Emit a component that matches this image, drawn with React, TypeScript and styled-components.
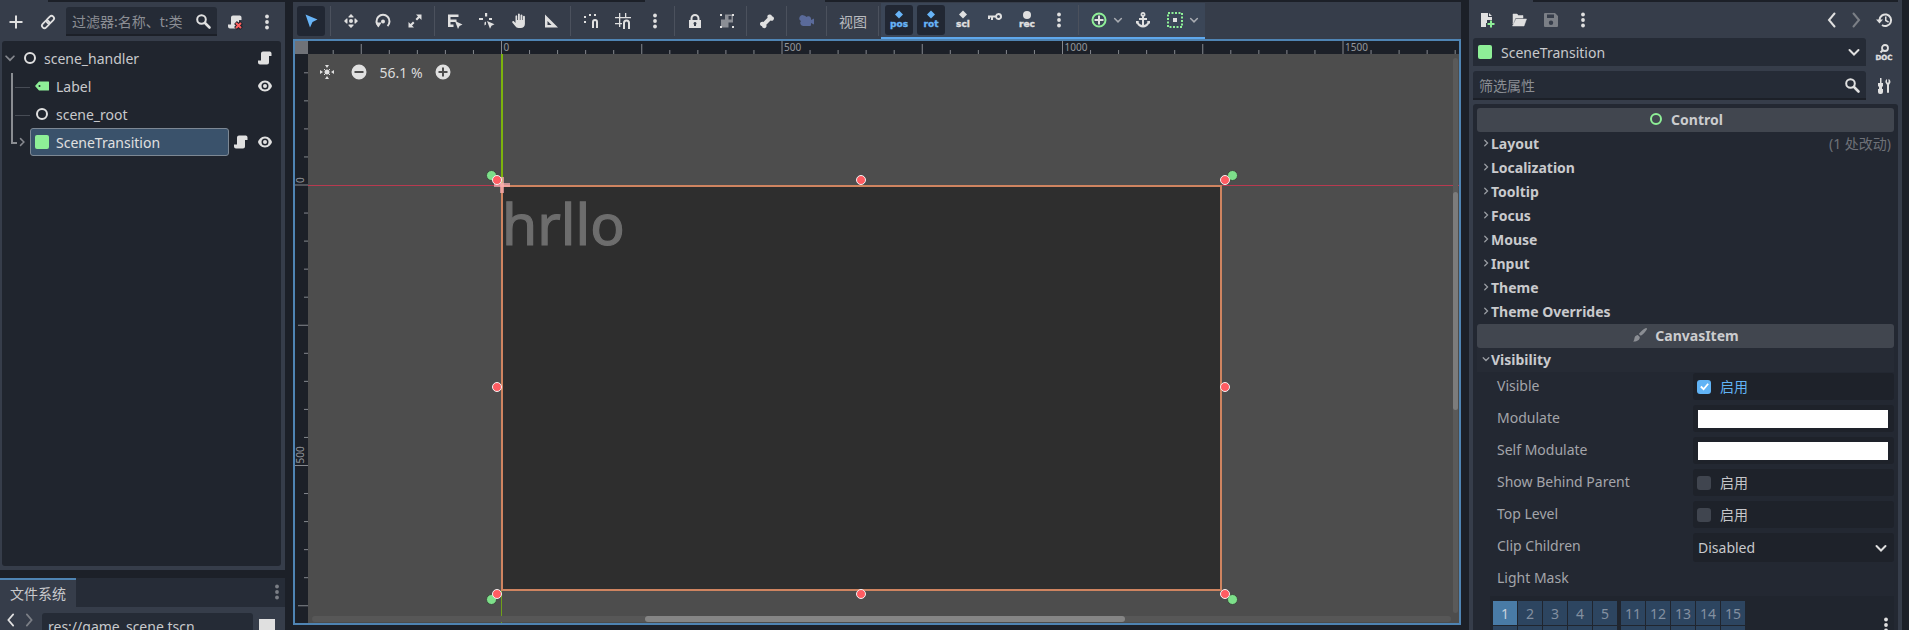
import React from "react";
import styled, { createGlobalStyle } from "styled-components";

const Global = createGlobalStyle`
  html, body { margin: 0; padding: 0; background: #1c2028; }
  body { width: 1909px; height: 630px; overflow: hidden; font-family: "Noto Sans", "Noto Sans CJK SC", sans-serif; font-size: 14px; color: #c8c9cc; }
  #root { width: 1909px; height: 630px; }
`;

const PANEL = "#363d4a";
const DARK = "#1c2028";
const FIELD = "#252b36";
const ICON = "#e0e0e0";

/* ---------- icons ---------- */
const Glyph = styled.svg<{ $size?: number; $color?: string }>`
  display: block;
  flex: none;
  width: ${(p) => p.$size ?? 16}px;
  height: ${(p) => p.$size ?? 16}px;
  color: ${(p) => p.$color ?? ICON};
  overflow: visible;
`;
const GlyphText = styled.text`
  font-family: "DejaVu Sans", sans-serif;
  font-weight: 700;
  fill: currentColor;
  stroke: currentColor;
  stroke-width: 0.35px;
`;
type IP = { $color?: string; $size?: number };
const mk = (children: React.ReactNode) => (p: IP) =>
  (
    <Glyph viewBox="0 0 16 16" fill="currentColor" {...p}>
      {children}
    </Glyph>
  );

const Plus = mk(<path d="M7 1.5h2V7h5.5v2H9v5.500H7V9H1.500V7H7z" />);
const Link = mk(
  <g fill="none" stroke="currentColor" strokeWidth="1.800" transform="rotate(-45 8 8)">
    <rect x="0.500" y="5.500" width="8.500" height="5" rx="2.500" />
    <rect x="7" y="5.500" width="8.500" height="5" rx="2.500" />
  </g>
);
const Search = mk(
  <g fill="none" stroke="currentColor">
    <circle cx="6.500" cy="6.500" r="4.300" strokeWidth="2" />
    <path d="M10 10l4.500 4.500" strokeWidth="2.600" strokeLinecap="round" />
  </g>
);
const scrollPath =
  "M6 1.500h7a2 2 0 0 1 1.500 2V6H12v6.500a2 2 0 0 1-2 2H3a2 2 0 0 1-2-2V10.500h3V3.500a2 2 0 0 1 2-2z";
const Script = mk(<path d={scrollPath} />);
const ScriptClear = mk(
  <>
    <path d={scrollPath} />
    <path d="M8.500 8.500l6 6m0-6l-6 6" stroke={DARK} strokeWidth="4" />
    <path d="M9 9l5 5m0-5l-5 5" stroke="#ff5f5f" strokeWidth="2" />
  </>
);
const Kebab = mk(
  <>
    <circle cx="8" cy="2.500" r="1.900" />
    <circle cx="8" cy="8" r="1.900" />
    <circle cx="8" cy="13.500" r="1.900" />
  </>
);
const Eye = mk(
  <>
    <path
      d="M8 2.500C12 2.500 14.500 6 15 8c-.5 2-3 5.500-7 5.500S1.500 10 1 8c.5-2 3-5.500 7-5.500zm0 2a3.500 3.500 0 1 0 0 7 3.500 3.500 0 0 0 0-7z"
      fillRule="evenodd"
    />
    <circle cx="8" cy="8" r="2" />
  </>
);
const Ring = mk(<circle cx="8" cy="8" r="5" fill="none" stroke="currentColor" strokeWidth="2" />);
const LabelTag = mk(
  <path
    d="M1 8l4-4.500h9.500a.5.5 0 0 1 .5.5v8a.5.5 0 0 1-.5.5H5zm4.500-1a1 1 0 1 0 0 2 1 1 0 0 0 0-2z"
    fillRule="evenodd"
  />
);
const Square = mk(<rect x="1" y="1" width="14" height="14" rx="2" />);
const Chevron = mk(
  <path d="M3.500 6l4.500 4.500L12.500 6" fill="none" stroke="currentColor" strokeWidth="2" strokeLinecap="round" />
);
const ChevronR = mk(
  <path d="M6 3.500L10.500 8 6 12.500" fill="none" stroke="currentColor" strokeWidth="2" strokeLinecap="round" />
);
const ArrowBack = mk(
  <path d="M10.500 1.500L5 8l5.500 6.500" fill="none" stroke="currentColor" strokeWidth="2" strokeLinecap="round" />
);
const ArrowFwd = mk(
  <path d="M5.500 1.500L11 8l-5.500 6.500" fill="none" stroke="currentColor" strokeWidth="2" strokeLinecap="round" />
);
const SelectArrow = mk(<path d="M2.500 1.500l12 5-5 2.500-2.500 5.500z" />);
const MoveTool = mk(
  <>
    <circle cx="8" cy="8" r="2" />
    <path d="M8 1l2.500 2.500v1h-5v-1zM8 15l-2.500-2.500v-1h5v1zM1 8l2.500-2.500h1v5h-1zM15 8l-2.500 2.500h-1v-5h1z" />
  </>
);
const RotateTool = mk(
  <>
    <path d="M3.500 13A6.500 6.500 0 1 1 12.500 13" fill="none" stroke="currentColor" strokeWidth="2" />
    <path d="M0.500 9.500h6L3.500 14.500z" />
    <circle cx="8" cy="8.500" r="2" />
  </>
);
const ScaleTool = mk(
  <path d="M9 1.500h5.500V7L12.500 5 10 7.500 8.500 6 11 3.500zM7 14.500H1.500V9L3.500 11 6 8.500 7.500 10 5 12.500z" />
);
const ListSelect = mk(
  <>
    <path d="M1 1.500h10.500v2.500H3.500v2.500h6V9h-6v2.500h3V14H1z" />
    <path d="M8 8l7.500 3.500-3 1.500-1.500 3z" />
  </>
);
const PivotTool = mk(
  <>
    <path d="M6 0h2.200v3.500H6zM0 5h4v2H0zM10 5h3v2h-3zM5.500 9.500l1.500-1v3l-1.500 1z" />
    <path d="M8 8l7.500 3.200-3 1.500-1.500 3z" />
  </>
);
const PanTool = mk(
  <path d="M7 1a1 1 0 0 1 1.800 0V7h.7V2.200a1 1 0 0 1 1.900 0V7h.6V3.500a1 1 0 0 1 1.900 0V11c0 2.500-2 4-4 4H7.500c-1.500 0-2.500-.8-3.300-2L1.300 9.500c-.6-1 .7-2 1.600-1.200L4.500 10V3a1 1 0 0 1 1.700 0v4H7z" />
);
const RulerTool = mk(<path d="M2 1.500l13 13H2zM4.500 8v4h4z" fillRule="evenodd" />);
const SmartSnap = mk(
  <>
    <path d="M9 9a3 3 0 0 1 6 0v6h-2V9a1 1 0 0 0-2 0v6H9z" />
    <path d="M1 3h2v2H1zM1 8h2v2H1zM6 1h2v2H6zM11 1h2v2h-2z" />
  </>
);
const GridSnap = mk(
  <>
    <path d="M4 0h1.300v14H4zM10 0h1.300v5H10zM0 4h16v1.300H0zM0 10h7v1.300H0z" />
    <path d="M8 10a3.500 3.500 0 0 1 7 0v6h-2v-6a1.500 1.500 0 0 0-3 0v6H8z" />
  </>
);
const LockIcon = mk(
  <path
    d="M8 1a4.500 4.500 0 0 1 4.500 4.500V7H14v8H2V7h1.500V5.500A4.500 4.500 0 0 1 8 1zm0 2a2.500 2.500 0 0 0-2.500 2.500V7h5V5.500A2.500 2.500 0 0 0 8 3zm0 6a1.500 1.500 0 0 0-1 2.600V13h2v-1.400A1.500 1.500 0 0 0 8 9z"
    fillRule="evenodd"
  />
);
const GroupIcon = mk(
  <>
    <path d="M6 1.500h8v8H9.500v5H2v-8h4z" opacity="0.5" />
    <path d="M9.500 3h3v3.500h-3z" fill={PANEL} />
    <path d="M1 1h2v2H1zM13 13h2v2h-2zM1 13h2v2H1zM13 1h2v2h-2z" />
  </>
);
const BoneIcon = mk(
  <path d="M11 1.500a2 2 0 0 1 2 1.700 2.300 2.300 0 0 1 1.200 4c-.8.700-1.900.7-2.700.3L7.300 11.800c.4.900.3 2-.4 2.700a2.300 2.300 0 0 1-3.900-1.300 2.300 2.300 0 0 1-1.300-3.900c.7-.7 1.800-.8 2.700-.4L8.600 4.700C8.200 3.800 8.200 2.700 9 2c.5-.4 1.300-.6 2-.5z" />
);
const CameraIcon = mk(
  <path d="M5 2.500a2.500 2.500 0 0 1 2.300 1.500A2.800 2.800 0 0 1 12 5.500V7l3-1.500v6L12 10v2a1 1 0 0 1-1 1H4.500A3 3 0 0 1 2 8 2.500 2.500 0 0 1 5 2.500z" />
);
const keyDiamond = <path d="M8 -1.500l4 4-4 4-4-4z" />;
const mkKey = (label: string) =>
  mk(
    <>
      {keyDiamond}
      <GlyphText x="8" y="15" fontSize="9" textAnchor="middle">
        {label}
      </GlyphText>
    </>
  );
const KeyPos = mkKey("pos");
const KeyRot = mkKey("rot");
const KeyScl = mkKey("scl");
const KeyRec = mk(
  <>
    <circle cx="8" cy="3" r="4" />
    <GlyphText x="8" y="15" fontSize="9" textAnchor="middle">
      rec
    </GlyphText>
  </>
);
const KeyIcon = mk(
  <path
    d="M11.500 1a3.500 3.500 0 1 1-3.300 4.600H6V8H4V5.600H3V7H1V3.600h7.200A3.500 3.500 0 0 1 11.500 1zm0 2a1.500 1.500 0 1 0 0 3 1.500 1.500 0 0 0 0-3z"
    fillRule="evenodd"
  />
);
const AddNode = mk(
  <>
    <circle cx="8" cy="8" r="6.500" fill="none" stroke="#8eef97" strokeWidth="2" />
    <path d="M7 3.500h2V7h3.500v2H9v3.500H7V9H3.500V7H7z" />
  </>
);
const AnchorIcon = mk(
  <path
    d="M8 0a2.500 2.500 0 0 1 1 4.800V6h3v2H9v5a4.500 4.500 0 0 0 3.700-3.200L11.500 9H15v3l-.8-.8C13.300 13.800 10.800 15.500 8 15.500s-5.300-1.700-6.200-4.300L1 12V9h3.500l-1.200.8A4.500 4.500 0 0 0 7 13V8H4V6h3V4.800A2.500 2.500 0 0 1 8 0zm0 1.800a.7.7 0 1 0 0 1.400.7.7 0 0 0 0-1.400z"
    fillRule="evenodd"
  />
);
const DottedBox = mk(
  <>
    <rect x="1" y="1" width="14" height="14" fill="none" stroke="#8eef97" strokeWidth="2" strokeDasharray="2 1.500" />
    <rect x="6" y="6" width="4" height="4" />
  </>
);
const CenterView = mk(
  <>
    <path d="M6 1h4L8 4zM6 15h4l-2-3zM1 6v4l3-2zM15 6v4l-3-2z" />
    <circle cx="8" cy="8" r="2.500" />
    <path d="M5 5l1 1M11 5l-1 1M5 11l1-1M11 11l-1-1" stroke="currentColor" strokeWidth="1" />
  </>
);
const ZoomMinus = mk(<path d="M8 .5a7.500 7.500 0 1 1 0 15 7.500 7.500 0 0 1 0-15zM3.500 7v2h9V7z" fillRule="evenodd" />);
const ZoomPlus = mk(
  <path
    d="M8 .5a7.500 7.500 0 1 1 0 15 7.500 7.500 0 0 1 0-15zM7 3.500V7H3.500v2H7v3.500h2V9h3.500V7H9V3.500z"
    fillRule="evenodd"
  />
);
const NewDoc = mk(
  <>
    <path d="M2 1h7v4h4v3H8v3H7v4H2zM10 1l3 3h-3z" />
    <path d="M11 8.500h2V11h2.500v2H13v2.500h-2V13H8.500v-2H11z" fill="#8eef97" />
  </>
);
const OpenFolder = mk(
  <path d="M2 2h4l1.500 1.500H12V6H4.500L2 12zM5 7h10.500L13 14H1.500z" stroke="currentColor" strokeWidth="0.500" />
);
const SaveIcon = mk(
  <path
    d="M2 1h10l3 3v10a1 1 0 0 1-1 1H2a1 1 0 0 1-1-1V2a1 1 0 0 1 1-1zm2 1.500V6h7V2.500zM8 8.500a2.200 2.200 0 1 0 0 4.400 2.200 2.200 0 0 0 0-4.400z"
    fillRule="evenodd"
  />
);
const HistoryIcon = mk(
  <>
    <path d="M3.500 8A5.800 5.800 0 1 1 6 13" fill="none" stroke="currentColor" strokeWidth="2" />
    <path d="M0 7.500h7L3.500 11.500z" />
    <path d="M9 4.500h1.500V8l2.500 1.500-.8 1.200L9 9z" />
  </>
);
const DocIcon = mk(
  <>
    <circle cx="9" cy="4" r="3" fill="none" stroke="currentColor" strokeWidth="1.800" />
    <path d="M7 6l-2.500 2.500" stroke="currentColor" strokeWidth="2" />
    <GlyphText x="8" y="15.500" fontSize="7" textAnchor="middle">
      DOC
    </GlyphText>
  </>
);
const ToolsIcon = mk(
  <path d="M4 0h1.500v5H7v3L6 9v2h1v3a2 2 0 0 1-2 2H4a2 2 0 0 1-2-2v-3h1V9L2 8V5h2zM11 1v3.500h1.500V1a3 3 0 0 1 1 5L13 7v7a1 1 0 0 1-2 0V7l-.5-1a3 3 0 0 1 .5-5z" />
);
const Brush = mk(
  <path d="M14 1c.8 0 1.200.7.800 1.400-1.500 2.500-3.400 4.600-6 6.400L6.800 7c1.900-2.600 4.500-4.800 7.200-6zM5.800 8l2 2c0 3-2.700 4.800-6.800 4.500 1.500-1 1-2.500 1.800-4.500.5-1 1.700-2 3-2z" />
);

/* ---------- layout ---------- */
const Page = styled.div`
  width: 1909px;
  height: 630px;
  background: ${DARK};
  display: grid;
  grid-template-columns: 285px 1168px 433px;
  column-gap: 8px;
  overflow: hidden;
`;
const Column = styled.div`
  display: flex;
  flex-direction: column;
  min-width: 0;
  height: 630px;
  overflow: hidden;
`;
const TopStrip = styled.div`
  display: flex;
  height: 2px;
  flex: none;
  background: ${DARK};
`;
const StripTab = styled.div<{ $w: number; $at?: number }>`
  width: ${(p) => p.$w}px;
  margin-left: ${(p) => p.$at ?? 0}px;
  background: ${PANEL};
`;
const Dock = styled.section<{ $h: number }>`
  height: ${(p) => p.$h}px;
  flex: none;
  background: ${PANEL};
  display: flex;
  flex-direction: column;
  overflow: hidden;
`;
const Toolbar = styled.div<{ $h?: number; $pad?: string }>`
  display: flex;
  align-items: center;
  gap: 4px;
  flex: none;
  height: ${(p) => p.$h ?? 39}px;
  padding: ${(p) => p.$pad ?? "0"};
  box-sizing: border-box;
`;
const Slot = styled.div<{ $active?: boolean; $w?: number; $split?: boolean }>`
  width: ${(p) => p.$w ?? 28}px;
  height: 30px;
  flex: none;
  display: flex;
  align-items: center;
  justify-content: ${(p) => (p.$split ? "flex-start" : "center")};
  gap: 5px;
  padding-left: ${(p) => (p.$split ? 6 : 0)}px;
  box-sizing: border-box;
  border-radius: 3px;
  background: ${(p) => (p.$active ? "#212733" : "transparent")};
  color: #c9cacc;
`;
const Sep = styled.div`
  width: 1px;
  height: 30px;
  flex: none;
  margin: 0 2px 0 1px;
  background: #4b515d;
`;
const Push = styled.div`
  flex: 1;
`;
const Field = styled.div<{ $w?: number; $h?: number; $border?: boolean; $pad?: number }>`
  width: ${(p) => (p.$w ? `${p.$w}px` : "auto")};
  flex: ${(p) => (p.$w ? "none" : "1")};
  height: ${(p) => p.$h ?? 28}px;
  box-sizing: border-box;
  background: ${FIELD};
  border-radius: 3px 3px 0 0;
  border-bottom: ${(p) => (p.$border ? "2px solid #1c2028" : "none")};
  padding: 0 ${(p) => p.$pad ?? 6}px;
  display: flex;
  align-items: center;
  justify-content: space-between;
  white-space: nowrap;
  overflow: hidden;
`;
const Placeholder = styled.span`
  color: #8b8e94;
`;

/* ---------- scene tree ---------- */
const TreeBox = styled.div`
  position: relative;
  flex: 1;
  margin: 0 4px 4px 2px;
  padding-top: 3px;
  background: #20252e;
  border-radius: 3px;
`;
const Row = styled.div<{ $indent: number }>`
  height: 28px;
  display: flex;
  align-items: center;
  padding: 0 4px 0 ${(p) => p.$indent}px;
`;
const Expander = styled.div`
  width: 14px;
  flex: none;
  color: #8d9096;
`;
const NameBox = styled.div<{ $selected?: boolean }>`
  flex: 1;
  height: 28px;
  box-sizing: border-box;
  display: flex;
  align-items: center;
  gap: 6px;
  padding-left: ${(p) => (p.$selected ? 3 : 4)}px;
  border-radius: 3px;
  color: ${(p) => (p.$selected ? "#e0e0e0" : "#c8c9cc")};
  background: ${(p) => (p.$selected ? "#3a526b" : "transparent")};
  border: 1px solid ${(p) => (p.$selected ? "#7d8894" : "transparent")};
`;
const RowBtn = styled.div`
  width: 24px;
  flex: none;
  display: flex;
  justify-content: center;
`;
const TreeLine = styled.div<{ $x: number; $y: number; $w: number; $h: number; $dim?: boolean }>`
  position: absolute;
  left: ${(p) => p.$x}px;
  top: ${(p) => p.$y}px;
  width: ${(p) => p.$w}px;
  height: ${(p) => p.$h}px;
  background: ${(p) => (p.$dim ? "#474c55" : "#8a8d92")};
`;
const BottomDock = styled(Dock)`
  margin-top: 8px;
`;
const TabBar = styled.div`
  height: 29px;
  flex: none;
  display: flex;
  align-items: center;
  justify-content: space-between;
  background: #262c37;
`;
const Tab = styled.div`
  width: 76px;
  height: 29px;
  box-sizing: border-box;
  border-top: 2px solid #4f84b3;
  padding-bottom: 2px;
  background: ${PANEL};
  display: flex;
  align-items: center;
  justify-content: center;
  color: #c8c9cc;
`;
const TabMenu = styled.div`
  width: 16px;
  padding-bottom: 2px;
`;
const PathRow = styled.div`
  display: flex;
  align-items: flex-start;
  padding: 6px 10px 0 4px;
  gap: 4px;
`;
const PathInput = styled.div`
  width: 211px;
  height: 28px;
  margin-left: 2px;
  box-sizing: border-box;
  background: ${FIELD};
  border-radius: 3px 3px 0 0;
  padding: 4px 6px 0;
  white-space: nowrap;
  color: #c8c9cc;
`;
const Swatch = styled.div`
  width: 16px;
  height: 16px;
  margin: 6px 0 0 2px;
  background: #e0e0e0;
`;

/* ---------- centre ---------- */
const CenterBar = styled(Toolbar)`
  background: ${PANEL};
  height: 37px;
  padding-left: 4px;
`;
const ViewLabel = styled(Slot)`
  color: #b9bbbf;
`;
const AnimBar = styled.div`
  display: flex;
  align-items: center;
  gap: 4px;
  height: 36px;
  box-sizing: border-box;
  margin: 1px 0 0 -4px;
  padding: 0 4px;
  background: #3b4657;
  border-bottom: 2px solid #5fa8ec;
`;
const Viewport = styled.div`
  height: 586px;
  flex: none;
  box-sizing: border-box;
  border: 2px solid #4f84b3;
  display: grid;
  grid-template-columns: 13px 1fr;
  grid-template-rows: 13px 1fr;
  background: ${DARK};
`;
const RulerCorner = styled.div`
  background: #6f7278;
`;
const RulerSvg = styled.svg`
  display: block;
  background: ${DARK};
`;
const RulerText = styled.text`
  font-family: "Noto Sans", sans-serif;
  font-size: 10px;
  fill: #94979d;
`;
const Canvas = styled.div`
  position: relative;
  overflow: hidden;
  background: #4d4d4d;
`;
const GuideV = styled.div<{ $top: number; $h: number; $thin?: boolean }>`
  position: absolute;
  left: 193px;
  top: ${(p) => p.$top}px;
  height: ${(p) => p.$h}px;
  width: ${(p) => (p.$thin ? 1 : 2)}px;
  background: ${(p) => (p.$thin ? "#70a01a" : "#7cb30c")};
`;
const GuideH = styled.div`
  position: absolute;
  left: 0;
  right: 0;
  top: 131px;
  height: 1px;
  background: #b83a50;
`;
const SceneRect = styled.div`
  position: absolute;
  left: 193px;
  top: 131px;
  width: 721px;
  height: 406px;
  box-sizing: border-box;
  border: 2px solid #cf8460;
  background: #2e2e2e;
`;
const SceneText = styled.div`
  font-family: "Noto Sans", sans-serif;
  font-size: 57px;
  font-weight: 400;
  -webkit-text-stroke: 1.2px #6d6d6d;
  color: #6d6d6d;
  margin: -2px 0 0 -1px;
  line-height: 76px;
`;
const Handle = styled.div<{ $x: number; $y: number; $green?: boolean }>`
  position: absolute;
  left: ${(p) => p.$x - 308 - 5}px;
  top: ${(p) => p.$y - 54 - 5}px;
  width: ${(p) => (p.$green ? 11 : 10)}px;
  height: ${(p) => (p.$green ? 11 : 10)}px;
  box-sizing: border-box;
  border-radius: 50%;
  background: ${(p) => (p.$green ? "#7de08a" : "#ff5c62")};
  border: 1.500px solid ${(p) => (p.$green ? "#3d4a3e" : "#f3f3f3")};
`;
const OriginH = styled.div`
  position: absolute;
  left: 186px;
  top: 129px;
  width: 16px;
  height: 4px;
  background: rgba(255, 175, 180, 0.7);
`;
const OriginV = styled.div`
  position: absolute;
  left: 192px;
  top: 123px;
  width: 4px;
  height: 16px;
  background: rgba(255, 175, 180, 0.7);
`;
const ZoomBar = styled.div`
  position: absolute;
  left: 11px;
  top: 6px;
  height: 24px;
  display: flex;
  align-items: center;
  gap: 16px;
  color: #dcdcdc;
`;
const ZoomText = styled.span`
  width: 46px;
  margin: 0 -5px 0 -5px;
  text-align: center;
  white-space: nowrap;
  font-size: 14px;
`;
const HTrack = styled.div`
  position: absolute;
  left: 4px;
  right: 8px;
  bottom: 1px;
  height: 6px;
  border-radius: 3px;
  background: #575757;
`;
const HThumb = styled.div`
  position: absolute;
  left: 333px;
  width: 480px;
  top: 0;
  bottom: 0;
  border-radius: 3px;
  background: #858585;
`;
const VTrack = styled.div`
  position: absolute;
  right: 1px;
  top: 4px;
  bottom: 10px;
  width: 5px;
  border-radius: 3px;
  background: #5a5a5a;
`;
const VThumb = styled.div`
  position: absolute;
  top: 134px;
  height: 218px;
  left: 0;
  right: 0;
  border-radius: 3px;
  background: #7c7c7c;
`;

/* ---------- inspector ---------- */
const Inspector = styled(Dock)`
  padding: 0 4px;
`;
const InspectorBar = styled.div`
  display: flex;
  align-items: center;
  gap: 4px;
  height: 35px;
  flex: none;
`;
const InspectorRow = styled.div<{ $h: number; $mt?: number }>`
  display: flex;
  align-items: center;
  height: ${(p) => p.$h}px;
  margin-top: ${(p) => p.$mt ?? 0}px;
  flex: none;
  gap: 4px;
`;
const NodeIconGap = styled.div`
  display: flex;
  align-items: center;
  gap: 8px;
`;
const SideIcon = styled.div`
  width: 28px;
  flex: none;
  display: flex;
  justify-content: center;
`;
const PropList = styled.div`
  flex: 1;
  margin-top: 4px;
  padding: 4px 4px 0;
  background: #232832;
  border-radius: 3px 3px 0 0;
  overflow: hidden;
`;
const Category = styled.div`
  height: 24px;
  box-sizing: border-box;
  padding-bottom: 2px;
  display: flex;
  align-items: center;
  justify-content: center;
  gap: 7px;
  background: #41464f;
  border-radius: 3px;
  font-weight: 700;
  color: #cbccce;
`;
const Section = styled.div<{ $open?: boolean }>`
  height: 24px;
  box-sizing: border-box;
  display: flex;
  align-items: center;
  justify-content: space-between;
  padding: 0 3px 2px 4px;
  font-weight: 700;
  color: #c9cacd;
  background: ${(p) => (p.$open ? "#262b35" : "transparent")};
`;
const SectionName = styled.div`
  display: flex;
  align-items: center;
`;
const Revert = styled.span`
  font-weight: 400;
  color: #6e7178;
`;
const PropGroup = styled.div`
  padding-top: 1px;
`;
const PropRow = styled.div<{ $h?: number }>`
  height: ${(p) => p.$h ?? 27}px;
  margin-bottom: 5px;
  display: flex;
  align-items: flex-start;
`;
const PropName = styled.div`
  flex: 1;
  padding: 3px 0 0 20px;
  color: #a3a5aa;
  white-space: nowrap;
`;
const PropValue = styled.div`
  width: 201px;
  height: 100%;
  box-sizing: border-box;
  background: #1e222a;
  border-radius: 3px;
  display: flex;
  align-items: center;
  justify-content: space-between;
  padding: 0 5px;
`;
const Check = styled.div<{ $on?: boolean }>`
  width: 14px;
  height: 14px;
  flex: none;
  border-radius: 3px;
  background: ${(p) => (p.$on ? "#61b3f5" : "#40454f")};
  display: flex;
  align-items: center;
  justify-content: center;
  margin-left: -1px;
`;
const Toggle = styled.div<{ $on?: boolean }>`
  display: flex;
  align-items: center;
  gap: 9px;
  color: ${(p) => (p.$on ? "#61b3f5" : "#c5c6c9")};
`;
const ToggleText = styled.span`
  margin-bottom: 2px;
`;
const ColorBar = styled.div`
  width: 190px;
  height: 18px;
  background: #ffffff;
`;
const LightLabel = styled.div`
  height: 29px;
  margin-top: 1px;
  padding: 1px 0 3px 20px;
  box-sizing: border-box;
  color: #a3a5aa;
  line-height: 19px;
`;
const LayerBox = styled.div`
  position: relative;
  margin: 0 0 0 13px;
  padding: 5px 3px;
  background: #20252e;
  display: flex;
  flex-direction: column;
  gap: 1px;
`;
const LayerRow = styled.div`
  display: flex;
  gap: 4px;
`;
const LayerGroup = styled.div`
  display: flex;
  gap: 1px;
`;
const Cell = styled.div<{ $on?: boolean }>`
  width: 24px;
  height: 24px;
  display: flex;
  align-items: center;
  justify-content: center;
  background: ${(p) => (p.$on ? "#497ba6" : "#2d4560")};
  color: ${(p) => (p.$on ? "#c8d2dc" : "#8390a0")};
`;
const LayerMenu = styled.div`
  position: absolute;
  right: 0;
  top: 21px;
`;

const Ruler = ({ vertical }: { vertical?: boolean }) => {
  const len = vertical ? 569 : 1151;
  const zero = vertical ? 131 : 193.5;
  const ticks: React.ReactNode[] = [];
  for (let i = -40; i < 200; i++) {
    const p = zero + i * 28.05;
    if (p < 0 || p > len) continue;
    const h = i % 10 === 0 ? 13 : i % 5 === 0 ? 10 : 4;
    ticks.push(
      vertical ? (
        <line key={i} x1={13 - h} x2={13} y1={p} y2={p} stroke="#85888e" />
      ) : (
        <line key={i} y1={13 - h} y2={13} x1={p} x2={p} stroke="#85888e" />
      )
    );
    if (i % 10 === 0 && i >= 0) {
      const label = String(i * 50);
      ticks.push(
        vertical ? (
          <RulerText key={`t${i}`} transform={`translate(9 ${p - 2}) rotate(-90)`}>
            {label}
          </RulerText>
        ) : (
          <RulerText key={`t${i}`} x={p + 2} y={10}>
            {label}
          </RulerText>
        )
      );
    }
  }
  return (
    <RulerSvg
      width={vertical ? 13 : len}
      height={vertical ? len : 13}
      viewBox={vertical ? `0 0 13 ${len}` : `0 0 ${len} 13`}
    >
      {ticks}
    </RulerSvg>
  );
};

const handles: [number, number, boolean?][] = [
  [491, 175, true],
  [497, 180],
  [861, 180],
  [1232, 175, true],
  [1225, 180],
  [497, 387],
  [1225, 387],
  [491, 599, true],
  [497, 594],
  [861, 594],
  [1232, 599, true],
  [1225, 594],
];

const sections = ["Localization", "Tooltip", "Focus", "Mouse", "Input", "Theme", "Theme Overrides"];

export default function App() {
  return (
    <>
      <Global />
      <Page>
        <Column>
          <Dock $h={570}>
            <TopStrip>
              <StripTab $w={48} />
            </TopStrip>
            <Toolbar $pad="0 0 0 2px">
              <Slot>
                <Plus />
              </Slot>
              <Slot>
                <Link />
              </Slot>
              <Field $w={151} $h={29} $border>
                <Placeholder>过滤器:名称、t:类</Placeholder>
                <Search />
              </Field>
              <Slot>
                <ScriptClear />
              </Slot>
              <Slot>
                <Kebab />
              </Slot>
            </Toolbar>
            <TreeBox>
              <Row $indent={1}>
                <Expander>
                  <Chevron $size={14} $color="#85888e" />
                </Expander>
                <NameBox>
                  <Ring />
                  scene_handler
                </NameBox>
                <RowBtn>
                  <Script />
                </RowBtn>
              </Row>
              <Row $indent={27}>
                <NameBox>
                  <LabelTag $color="#8eef97" />
                  Label
                </NameBox>
                <RowBtn>
                  <Eye />
                </RowBtn>
              </Row>
              <Row $indent={27}>
                <NameBox>
                  <Ring />
                  scene_root
                </NameBox>
              </Row>
              <Row $indent={14}>
                <Expander>
                  <ChevronR $size={12} $color="#85888e" />
                </Expander>
                <NameBox $selected>
                  <Square $color="#8eef97" />
                  SceneTransition
                </NameBox>
                <RowBtn>
                  <Script />
                </RowBtn>
                <RowBtn>
                  <Eye />
                </RowBtn>
              </Row>
              <TreeLine $x={9} $y={32} $w={1.5} $h={70} />
              <TreeLine $x={9} $y={101} $w={6} $h={1.5} />
              <TreeLine $x={13} $y={46} $w={15} $h={1} $dim />
              <TreeLine $x={13} $y={74} $w={15} $h={1} $dim />
            </TreeBox>
          </Dock>
          <BottomDock $h={52}>
            <TabBar>
              <Tab>文件系统</Tab>
              <TabMenu>
                <Kebab $color="#7b7f86" />
              </TabMenu>
            </TabBar>
            <PathRow>
              <ArrowBack $size={14} />
              <ArrowFwd $size={14} $color="#7b7f86" />
              <PathInput>res://game_scene.tscn</PathInput>
              <Swatch />
            </PathRow>
          </BottomDock>
        </Column>

        <Column>
          <TopStrip>
            <StripTab $w={180} $at={352} />
          </TopStrip>
          <CenterBar>
            <Slot $active>
              <SelectArrow $color="#68b4f7" />
            </Slot>
            <Sep />
            <Slot>
              <MoveTool />
            </Slot>
            <Slot>
              <RotateTool />
            </Slot>
            <Slot>
              <ScaleTool />
            </Slot>
            <Sep />
            <Slot>
              <ListSelect />
            </Slot>
            <Slot>
              <PivotTool />
            </Slot>
            <Slot>
              <PanTool />
            </Slot>
            <Slot>
              <RulerTool />
            </Slot>
            <Sep />
            <Slot>
              <SmartSnap />
            </Slot>
            <Slot>
              <GridSnap />
            </Slot>
            <Slot>
              <Kebab />
            </Slot>
            <Sep />
            <Slot>
              <LockIcon />
            </Slot>
            <Slot>
              <GroupIcon />
            </Slot>
            <Sep />
            <Slot>
              <BoneIcon />
            </Slot>
            <Sep />
            <Slot>
              <CameraIcon $color="#5a6a9a" />
            </Slot>
            <Sep />
            <ViewLabel $w={40}>视图</ViewLabel>
            <Sep />
            <AnimBar>
              <Slot $active>
                <KeyPos $color="#68b4f7" />
              </Slot>
              <Slot $active>
                <KeyRot $color="#68b4f7" />
              </Slot>
              <Slot>
                <KeyScl />
              </Slot>
              <Slot>
                <KeyIcon />
              </Slot>
              <Slot>
                <KeyRec />
              </Slot>
              <Slot>
                <Kebab />
              </Slot>
              <Sep />
              <Slot $w={40} $split>
                <AddNode />
                <Chevron $size={12} $color="#a9acb2" />
              </Slot>
              <Slot>
                <AnchorIcon />
              </Slot>
              <Slot $w={40} $split>
                <DottedBox />
                <Chevron $size={12} $color="#a9acb2" />
              </Slot>
            </AnimBar>
          </CenterBar>
          <Viewport>
            <RulerCorner />
            <Ruler />
            <Ruler vertical />
            <Canvas>
              <GuideV $top={0} $h={131} />
              <GuideH />
              <SceneRect>
                <SceneText>hrllo</SceneText>
              </SceneRect>
              <GuideV $top={537} $h={32} $thin />
              <OriginH />
              <OriginV />
              {handles.map(([x, y, g], i) => (
                <Handle key={i} $x={x} $y={y} $green={g} />
              ))}
              <ZoomBar>
                <CenterView />
                <ZoomMinus />
                <ZoomText>56.1 %</ZoomText>
                <ZoomPlus />
              </ZoomBar>
              <HTrack>
                <HThumb />
              </HTrack>
              <VTrack>
                <VThumb />
              </VTrack>
            </Canvas>
          </Viewport>
        </Column>

        <Column>
          <Inspector $h={630}>
            <TopStrip>
              <StripTab $w={60} />
            </TopStrip>
            <InspectorBar>
              <Slot>
                <NewDoc />
              </Slot>
              <Slot>
                <OpenFolder />
              </Slot>
              <Slot>
                <SaveIcon $color="#7b7f86" />
              </Slot>
              <Slot>
                <Kebab />
              </Slot>
              <Push />
              <Slot $w={20}>
                <ArrowBack />
              </Slot>
              <Slot $w={20}>
                <ArrowFwd $color="#7b7f86" />
              </Slot>
              <Slot $w={28}>
                <HistoryIcon />
              </Slot>
            </InspectorBar>
            <InspectorRow $h={30}>
              <Field $pad={4}>
                <NodeIconGap>
                  <Square $color="#8eef97" />
                  SceneTransition
                </NodeIconGap>
                <Chevron />
              </Field>
              <SideIcon>
                <DocIcon />
              </SideIcon>
            </InspectorRow>
            <InspectorRow $h={29} $mt={4}>
              <Field $h={29} $border>
                <Placeholder>筛选属性</Placeholder>
                <Search />
              </Field>
              <SideIcon>
                <ToolsIcon />
              </SideIcon>
            </InspectorRow>
            <PropList>
              <Category>
                <Ring $color="#8eef97" />
                Control
              </Category>
              <Section>
                <SectionName>
                  <ChevronR $size={10} $color="#9a9da3" />
                  Layout
                </SectionName>
                <Revert>(1 处改动)</Revert>
              </Section>
              {sections.map((s) => (
                <Section key={s}>
                  <SectionName>
                    <ChevronR $size={10} $color="#9a9da3" />
                    {s}
                  </SectionName>
                </Section>
              ))}
              <Category>
                <Brush $color="#8b8e94" />
                CanvasItem
              </Category>
              <Section $open>
                <SectionName>
                  <Chevron $size={10} $color="#9a9da3" />
                  Visibility
                </SectionName>
              </Section>
              <PropGroup>
                <PropRow>
                  <PropName>Visible</PropName>
                  <PropValue>
                    <Toggle $on>
                      <Check $on>
                        <svg viewBox="0 0 12 12" width="11" height="11">
                          <path d="M2 6l3 3 5-6" fill="none" stroke="#fff" strokeWidth="2" />
                        </svg>
                      </Check>
                      <ToggleText>启用</ToggleText>
                    </Toggle>
                  </PropValue>
                </PropRow>
                <PropRow>
                  <PropName>Modulate</PropName>
                  <PropValue>
                    <ColorBar />
                  </PropValue>
                </PropRow>
                <PropRow>
                  <PropName>Self Modulate</PropName>
                  <PropValue>
                    <ColorBar />
                  </PropValue>
                </PropRow>
                <PropRow>
                  <PropName>Show Behind Parent</PropName>
                  <PropValue>
                    <Toggle>
                      <Check />
                      <ToggleText>启用</ToggleText>
                    </Toggle>
                  </PropValue>
                </PropRow>
                <PropRow>
                  <PropName>Top Level</PropName>
                  <PropValue>
                    <Toggle>
                      <Check />
                      <ToggleText>启用</ToggleText>
                    </Toggle>
                  </PropValue>
                </PropRow>
                <PropRow $h={29}>
                  <PropName>Clip Children</PropName>
                  <PropValue>
                    Disabled
                    <Chevron />
                  </PropValue>
                </PropRow>
              </PropGroup>
              <LightLabel>Light Mask</LightLabel>
              <LayerBox>
                <LayerRow>
                  <LayerGroup>
                    <Cell $on>1</Cell>
                    {[2, 3, 4, 5].map((n) => (
                      <Cell key={n}>{n}</Cell>
                    ))}
                  </LayerGroup>
                  <LayerGroup>
                    {[11, 12, 13, 14, 15].map((n) => (
                      <Cell key={n}>{n}</Cell>
                    ))}
                  </LayerGroup>
                </LayerRow>
                <LayerRow>
                  <LayerGroup>
                    {[6, 7, 8, 9, 10].map((n) => (
                      <Cell key={n}>{n}</Cell>
                    ))}
                  </LayerGroup>
                  <LayerGroup>
                    {[16, 17, 18, 19, 20].map((n) => (
                      <Cell key={n}>{n}</Cell>
                    ))}
                  </LayerGroup>
                </LayerRow>
                <LayerMenu>
                  <Kebab />
                </LayerMenu>
              </LayerBox>
            </PropList>
          </Inspector>
        </Column>
      </Page>
    </>
  );
}
